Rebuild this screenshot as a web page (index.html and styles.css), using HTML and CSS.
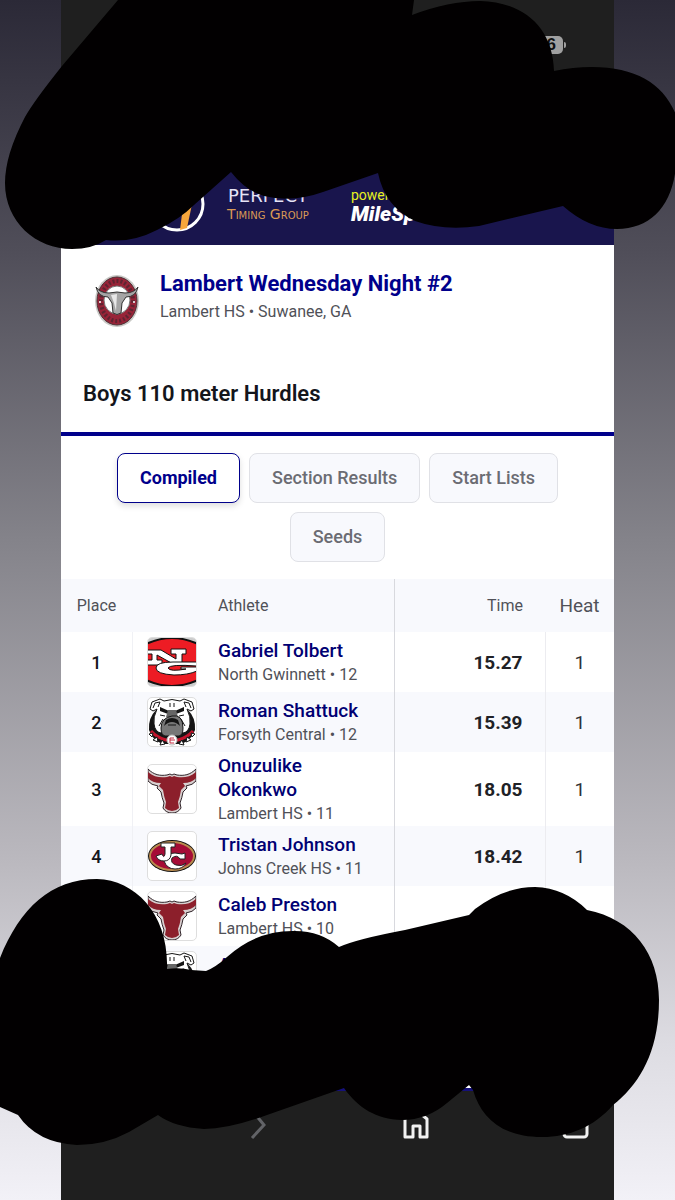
FILE: index.html
```html
<!DOCTYPE html>
<html lang="en">
<head>
<meta charset="utf-8">
<meta name="viewport" content="width=device-width, initial-scale=1">
<title>Lambert Wednesday Night #2</title>
<link rel="stylesheet" href="styles.css">
</head>
<body>
<svg class="symbols" aria-hidden="true">
  <symbol id="bull" viewBox="0 0 48 48">
    <path d="M0 4C6 10 12 11 19 10L22 9L24 10L26 9L29 10C36 11 42 10 48 4V16Q45 20 38 21L39 23L35 27Q34 33 32 38L33 43Q30 48 24 48T15 43L16 38Q14 33 13 27L9 23L10 21Q3 20 0 16Z" fill="#d8cfcf" stroke="#30252a" stroke-width="1"/>
    <path d="M0 7C6 12 12 13 19 12L22 11L24 12L26 11L29 12C36 13 42 12 48 7V13Q44 18 35 18L37 21L33 25Q32 32 30 37L31 43Q28 46 24 46T17 43L18 37Q16 32 15 25L11 21L13 18Q4 18 0 13Z" fill="#8c1f2b"/>
  </symbol>
  <symbol id="bulldog" viewBox="0 0 48 48">
    <path d="M8 12Q0 20 1 32Q4 42 15 46H33Q44 42 47 32Q48 20 40 12Z" fill="#151515"/>
    <path d="M2 11L4 4L12 1L16 3Q24 0 32 3L36 1L44 4L46 11L43 13L39 11Q43 19 42 26Q41 34 35 35H13Q7 34 6 26Q5 19 9 11L5 13Z" fill="#fff" stroke="#151515" stroke-width="1"/>
    <path d="M5 10L7 5L12 4L10 9M43 10L41 5L36 4L38 9" fill="none" stroke="#151515" stroke-width="1"/>
    <path d="M12 9L21 13L20 16L12 13ZM36 9L27 13L28 16L36 13Z" fill="#151515"/>
    <path d="M22 5V9M26 5V9M12 17L17 18M36 17L31 18M15 21L11 28M33 21L37 28" fill="none" stroke="#151515" stroke-width="1"/>
    <path d="M20 12H28L30 19H18Z" fill="#666"/>
    <path d="M13 30Q13 20 24 18T35 30Q35 37 31 38H17Q13 37 13 30Z" fill="#777" stroke="#151515" stroke-width="1"/>
    <path d="M16 28Q24 20 32 28L30 22Q24 18 18 22Z" fill="#151515"/>
    <path d="M20 27H28" stroke="#151515" stroke-width="1"/>
    <path d="M3 33Q8 39 18 42H30Q40 39 45 33" fill="none" stroke="#c3142c" stroke-width="3"/>
    <path d="M1 36L5 35L4 39ZM5 42L9 39L10 44ZM12 47L14 42L17 46ZM47 36L43 35L44 39ZM43 42L39 39L38 44ZM36 47L34 42L31 46Z" fill="#fff" stroke="#151515" stroke-width="1"/>
    <circle cx="24" cy="42" r="5" fill="#fff" stroke="#bbb"/>
    <path d="M26 40H22V45H26M22 42H27" fill="none" stroke="#c22a40" stroke-width="1"/>
  </symbol>
</svg>

<div class="phone">
  <div class="status"><span class="battery">86</span></div>

  <header class="banner">
    <svg class="banner-mark" viewBox="0 0 56 56" aria-hidden="true">
      <circle cx="28" cy="28" r="26" fill="none" stroke="#fff" stroke-width="3"/>
      <path d="M36 14H46L38 52L31 54Z" fill="#f7a63c"/>
    </svg>
    <div class="brand"><span class="brand-top">PERFECT</span><span class="brand-sub">Timing Group</span></div>
    <div class="powered"><span class="powered-by">powered by</span><span class="milesplit">MileSplit</span></div>
  </header>

  <main class="page">
    <section class="meet">
      <svg class="meet-logo" viewBox="0 0 46 54" aria-hidden="true">
        <ellipse cx="23" cy="27" rx="22" ry="26" fill="#c9c9c6"/>
        <ellipse cx="23" cy="27" rx="20" ry="24" fill="#982438" stroke="#4d3036" stroke-width="1"/>
        <ellipse cx="23" cy="27" rx="16" ry="20" fill="none" stroke="#5e2431" stroke-width="4" stroke-dasharray="2 2"/>
        <ellipse cx="23" cy="26" rx="13" ry="14" fill="#fff" stroke="#777"/>
        <path d="M2 13Q6 19 15 19Q23 17 31 19Q40 19 44 13Q42 23 32 23L28 29L27 39Q23 42 19 39L18 29L14 23Q4 23 2 13Z" fill="#a5a5a5" stroke="#333" stroke-width="1"/>
        <path d="M17 21L23 20L22 37L20 29Z" fill="#e8e8e8"/>
        <circle cx="6" cy="28" r="1" fill="#fff"/><circle cx="40" cy="28" r="1" fill="#fff"/>
      </svg>
      <div>
        <h1 class="meet-name"><a href="#meet">Lambert Wednesday Night #2</a></h1>
        <p class="meet-place">Lambert HS • Suwanee, GA</p>
      </div>
    </section>
    <h2 class="event">Boys 110 meter Hurdles</h2>

    <nav class="tabs">
      <button class="tab tab-active" type="button">Compiled</button>
      <button class="tab" type="button">Section Results</button>
      <button class="tab" type="button">Start Lists</button>
      <button class="tab" type="button">Seeds</button>
    </nav>

    <table class="results">
      <thead>
        <tr><th class="place">Place</th><th class="logo"></th><th class="athlete">Athlete</th><th class="time">Time</th><th class="heat">Heat</th></tr>
      </thead>
      <tbody>
        <tr>
          <td class="place">1</td>
          <td class="logo"><svg class="team" viewBox="0 0 48 48" role="img" aria-label="North Gwinnett">
            <rect width="48" height="48" fill="#ccc"/>
            <path d="M-2 6Q24 -6 50 6V42Q24 54 -2 42Z" fill="#ed1c24" stroke="#111" stroke-width="2"/>
            <path d="M-1 12H13L28 21V16H23V11H38V16H34V27H27L9 17V22H14V27H-1V22H4V16H-1Z" fill="#fff" stroke="#111" stroke-width="1"/>
            <path d="M49 24H25Q8 24 8 30T26 37Q40 37 49 33V29H33V31H38Q22 34 20 30Q22 26 49 28Z" fill="#fff" stroke="#111" stroke-width="1"/>
          </svg></td>
          <td class="athlete"><a href="#a1">Gabriel Tolbert</a><span>North Gwinnett • 12</span></td>
          <td class="time">15.27</td><td class="heat">1</td>
        </tr>
        <tr>
          <td class="place">2</td>
          <td class="logo"><svg class="team" role="img" aria-label="Forsyth Central"><use href="#bulldog"/></svg></td>
          <td class="athlete"><a href="#a2">Roman Shattuck</a><span>Forsyth Central • 12</span></td>
          <td class="time">15.39</td><td class="heat">1</td>
        </tr>
        <tr>
          <td class="place">3</td>
          <td class="logo"><svg class="team" role="img" aria-label="Lambert HS"><use href="#bull"/></svg></td>
          <td class="athlete"><a href="#a3">Onuzulike Okonkwo</a><span>Lambert HS • 11</span></td>
          <td class="time">18.05</td><td class="heat">1</td>
        </tr>
        <tr>
          <td class="place">4</td>
          <td class="logo"><svg class="team" viewBox="0 0 48 48" role="img" aria-label="Johns Creek HS">
            <ellipse cx="24" cy="24" rx="24" ry="16" fill="#111"/>
            <ellipse cx="24" cy="24" rx="22" ry="14" fill="#a50c36" stroke="#b98a4e" stroke-width="2"/>
            <path d="M37 21V27H32Q29 22 24 26Q22 31 28 33T38 31Q35 37 27 37T16 29Q17 21 27 21L34 22Z" fill="#fff" stroke="#222" stroke-width="1"/>
            <path d="M13 11H27V15H23V23Q22 29 16 29T8 24L14 22Q16 27 17 22V15H13Z" fill="#fff" stroke="#222" stroke-width="1"/>
          </svg></td>
          <td class="athlete"><a href="#a4">Tristan Johnson</a><span>Johns Creek HS • 11</span></td>
          <td class="time">18.42</td><td class="heat">1</td>
        </tr>
        <tr>
          <td class="place"></td>
          <td class="logo"><svg class="team" role="img" aria-label="Lambert HS"><use href="#bull"/></svg></td>
          <td class="athlete"><a href="#a5">Caleb Preston</a><span>Lambert HS • 10</span></td>
          <td class="time"></td><td class="heat"></td>
        </tr>
        <tr>
          <td class="place"></td>
          <td class="logo"><svg class="team" role="img" aria-label="Forsyth Central"><use href="#bulldog"/></svg></td>
          <td class="athlete"><a href="#a6">A</a><span>Forsyth Central</span></td>
          <td class="time"></td><td class="heat"></td>
        </tr>
      </tbody>
    </table>
  </main>

  <nav class="toolbar" aria-label="Browser">
    <a href="#back" aria-label="Back"></a>
    <a href="#forward" aria-label="Forward"><svg viewBox="0 0 28 28"><path d="M12 1L21 12L9 25" fill="none" stroke="#626367" stroke-width="3"/></svg></a>
    <a href="#home" aria-label="Home"><svg viewBox="0 0 28 28"><path d="M3 6L14 -3L25 6V24H18V13H11V24H3Z" fill="none" stroke="#f2f2f2" stroke-width="3" stroke-linejoin="round"/></svg></a>
    <a href="#tabs" aria-label="Tabs"><svg viewBox="0 0 28 28"><rect x="2" y="2" width="23" height="22" rx="3" fill="none" stroke="#f2f2f2" stroke-width="3"/></svg></a>
  </nav>
</div>

<svg class="scribble" viewBox="0 0 675 1200" preserveAspectRatio="none" aria-hidden="true">
  <path d="M118 0L62 66Q34 101 25 117Q5 155 5 183C5 222 36 249 72 249Q92 249 106 240Q132 243 157 230Q180 219 194 205L231 172Q246 191 264 196Q292 203 323 192L378 173Q385 207 415 221Q443 231 479 226L563 206Q589 229 617 229C651 229 673 205 676 165V115C664 84 636 67 592 67Q573 67 554 71C553 28 524 2 480 1Q449 1 412 15L414 0Z"/>
  <path d="M0 958C20 908 51 879 97 879C136 880 169 915 167 969Q180 967 191 970L206 971Q216 967 227 957Q257 930 295 931Q321 931 339 947Q357 939 405 930L469 915L475 909Q504 887 535 887Q565 888 587 910C633 919 659 954 659 1000C659 1051 640 1084 613 1105C594 1127 569 1137 542 1137C502 1137 481 1118 473 1090L469 1085L447 1103Q427 1120 402 1120C376 1119 358 1108 344 1088L267 1115Q229 1129 204 1129Q174 1127 158 1115L129 1132Q105 1145 77 1145Q37 1143 18 1115L0 1107Z"/>
</svg>
</body>
</html>
```

FILE: styles.css
```css
* { box-sizing: border-box; }

body {
  margin: 0;
  min-height: 100vh;
  position: relative;
  overflow-x: hidden;
  padding: 0 61px;
  background: linear-gradient(#2b2937 0%, #504e59 21%, #84838a 45%, #bbb9bf 72%, #dddce2 87%, #f2f1f7 100%);
  color: #14151b;
  font-family: Roboto, "Liberation Sans", sans-serif;
  font-size: 16px;
}

a { color: inherit; text-decoration: none; }

.symbols { position: absolute; width: 0; height: 0; }

.phone {
  display: flex;
  flex-direction: column;
  min-height: 100vh;
  background: #1f1f1f;
}

.status {
  display: flex;
  justify-content: flex-end;
  height: 152px;
  padding: 36px 48px 0 0;
}

.battery {
  height: 18px;
  padding: 0 7px;
  border-radius: 5px;
  background: #a0a0a0;
  color: #111;
  font-family: "Liberation Sans", sans-serif;
  font-size: 17px;
  line-height: 18px;
  font-weight: 700;
}

.status::after {
  content: "";
  width: 2px;
  height: 6px;
  margin: 6px 0 0 1px;
  border-radius: 0 2px 2px 0;
  background: #a0a0a0;
}

.banner {
  display: flex;
  align-items: flex-start;
  height: 93px;
  padding: 24px 24px 0 88px;
  background: #19154d;
}

.banner-mark { flex: none; width: 56px; height: 56px; }

.brand {
  flex: none;
  display: flex;
  flex-direction: column;
  align-items: center;
  width: 126px;
  padding-top: 11px;
  font-family: "DejaVu Sans", sans-serif;
}

.brand-top { color: #e6e3f6; font-size: 18px; line-height: 18px; }
.brand-sub { color: #d99a55; font-size: 14px; line-height: 18px; font-variant: small-caps; }

.powered { display: flex; flex-direction: column; padding: 10px 0 0 20px; }
.powered-by { color: #e8f020; font-size: 14px; line-height: 18px; }
.milesplit { color: #fff; font-size: 21px; line-height: 20px; font-style: italic; font-weight: 900; }

.page { flex: 1; background: #fff; }

.meet {
  display: flex;
  align-items: flex-start;
  gap: 20px;
  padding: 25px 20px 0 33px;
}

.meet-logo { width: 46px; height: 62px; }
.meet-name { margin: 0; color: #00008b; font-size: 22px; line-height: 28px; font-weight: 700; }
.meet-place { margin: 0; color: #505158; font-size: 16px; line-height: 28px; }

.event {
  margin: 0;
  padding: 48px 22px 24px;
  border-bottom: 4px solid #00008b;
  font-size: 22px;
  line-height: 28px;
  font-weight: 600;
}

.tabs {
  display: flex;
  flex-wrap: wrap;
  justify-content: center;
  gap: 9px;
  padding: 17px 48px;
}

.tab {
  height: 50px;
  padding: 0 22px 2px;
  border: 1px solid #e0e1e6;
  border-radius: 8px;
  background: #f8f9fd;
  color: #6b6c73;
  font: 500 18px Roboto, sans-serif;
}

.tab-active {
  border-color: #00008b;
  background: #fff;
  color: #00008b;
  font-weight: 700;
  box-shadow: 0 3px 6px #0002;
}

.results {
  width: 100%;
  border-collapse: collapse;
  table-layout: fixed;
}

.results th {
  height: 53px;
  padding: 0;
  color: #505158;
  font-size: 16px;
  font-weight: 400;
}

.results td { height: 60px; padding: 0; }
.results thead, .results tr:nth-child(even) { background: #f8f9fd; }

.results .place { width: 71px; text-align: center; }
.results .logo { width: 72px; }
.results .athlete { padding: 0 14px; border-right: 1px solid #d8d9de; text-align: left; }
.results .time { width: 151px; padding-right: 22px; text-align: right; }
.results .heat { width: 69px; text-align: center; }
.results th.heat { font-size: 19px; }

.results td.athlete { padding-top: 2px; }
.results td.place { border-right: 1px solid #f0f1f5; font-size: 18px; font-weight: 500; }
.results td.time { border-right: 1px solid #ececf0; font-size: 19px; font-weight: 700; color: #202126; }
.results td.heat { font-size: 19px; color: #303137; }

.athlete a { display: block; color: #000073; font-size: 19px; line-height: 24px; font-weight: 500; }
.athlete span { display: block; color: #505158; font-size: 16px; line-height: 24px; }

.team {
  display: block;
  width: 50px;
  height: 50px;
  margin-left: 14px;
  border: 1px solid #dedede;
  border-radius: 5px;
  background: #fff;
}

.toolbar {
  display: flex;
  justify-content: space-between;
  height: 112px;
  padding: 22px 24px 0 22px;
  border-top: 3px solid #15107a;
}

.toolbar a { width: 28px; height: 28px; }
.toolbar svg { display: block; width: 28px; height: 28px; }

.scribble {
  position: absolute;
  top: 0;
  left: 0;
  width: 100%;
  height: 100%;
  fill: #020001;
  pointer-events: none;
}
```
